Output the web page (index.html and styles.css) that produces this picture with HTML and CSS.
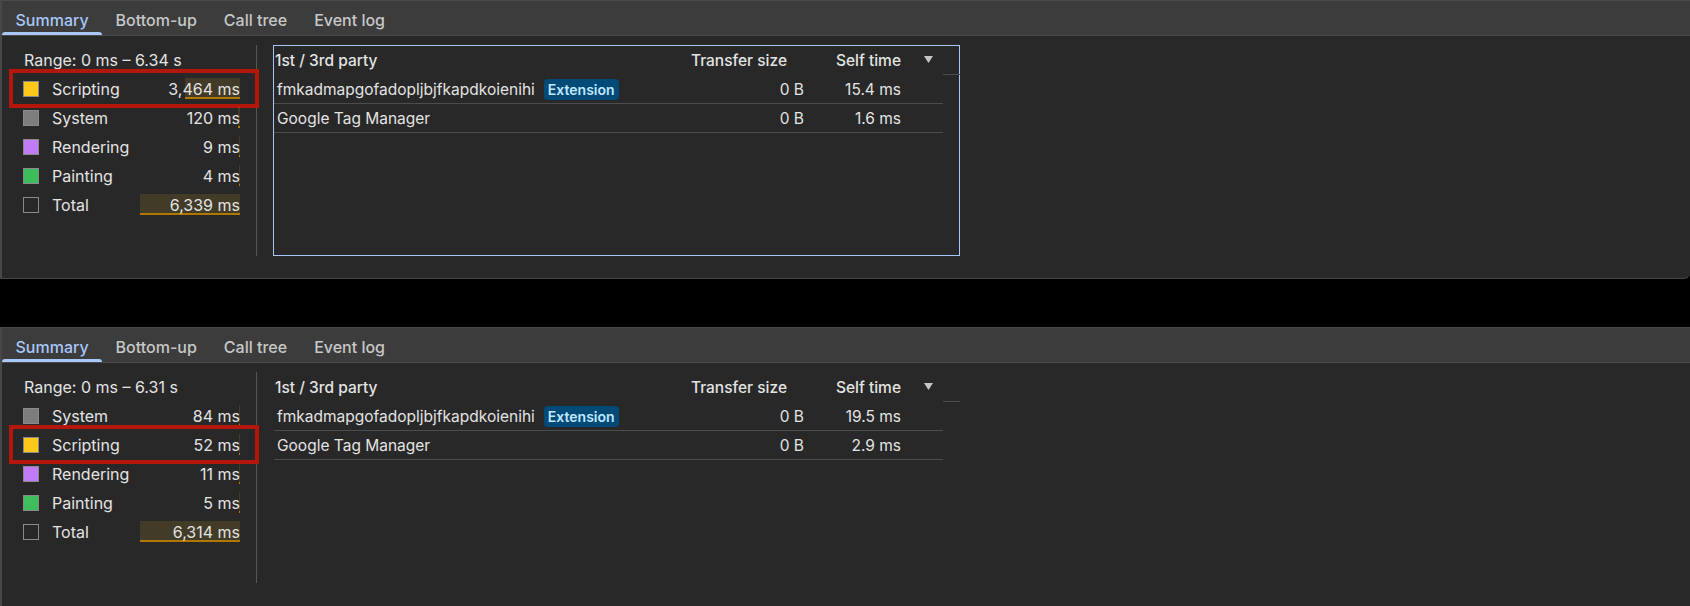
FILE: index.html
```html
<!DOCTYPE html>
<html>
<head>
<meta charset="utf-8">
<link rel="stylesheet" href="styles.css">
</head>
<body>
<div class="panel panel-1">
  <div class="tabbar">
    <div class="tab active">Summary</div>
    <div class="tab">Bottom-up</div>
    <div class="tab">Call tree</div>
    <div class="tab">Event log</div>
  </div>
  <div class="body">
    <div class="summary">
      <div class="range">Range: 0 ms – 6.34 s</div>
      <div class="cat highlight"><span class="swatch sw-script"></span><span class="label">Scripting</span><span class="value"><span class="bar" style="width:54.6px"></span><span class="num">3,464 ms</span></span></div>
      <div class="cat"><span class="swatch sw-system"></span><span class="label">System</span><span class="value"><span class="bar" style="width:1.9px"></span><span class="num">120 ms</span></span></div>
      <div class="cat"><span class="swatch sw-render"></span><span class="label">Rendering</span><span class="value"><span class="bar" style="width:1px"></span><span class="num">9 ms</span></span></div>
      <div class="cat"><span class="swatch sw-paint"></span><span class="label">Painting</span><span class="value"><span class="bar" style="width:1px"></span><span class="num">4 ms</span></span></div>
      <div class="cat"><span class="swatch sw-total"></span><span class="label">Total</span><span class="value"><span class="bar" style="width:100px"></span><span class="num">6,339 ms</span></span></div>
    </div>
    <div class="divider"></div>
    <div class="table focused">
      <div class="thead">
        <div class="th name">1st / 3rd party</div>
        <div class="th size">Transfer size</div>
        <div class="th self">Self time<svg class="sort" width="9" height="7" viewBox="0 0 9 7"><polygon points="0,0 9,0 4.5,7"/></svg></div>
        <div class="gutter"></div>
      </div>
      <div class="tr">
        <div class="td name">fmkadmapgofadopljbjfkapdkoienihi<span class="badge">Extension</span></div>
        <div class="td size">0 B</div>
        <div class="td self">15.4 ms</div>
      </div>
      <div class="tr">
        <div class="td name">Google Tag Manager</div>
        <div class="td size">0 B</div>
        <div class="td self">1.6 ms</div>
      </div>
    </div>
  </div>
</div>

<div class="panel panel-2">
  <div class="tabbar">
    <div class="tab active">Summary</div>
    <div class="tab">Bottom-up</div>
    <div class="tab">Call tree</div>
    <div class="tab">Event log</div>
  </div>
  <div class="body">
    <div class="summary">
      <div class="range">Range: 0 ms – 6.31 s</div>
      <div class="cat"><span class="swatch sw-system"></span><span class="label">System</span><span class="value"><span class="bar" style="width:1.3px"></span><span class="num">84 ms</span></span></div>
      <div class="cat highlight"><span class="swatch sw-script"></span><span class="label">Scripting</span><span class="value"><span class="bar" style="width:1px"></span><span class="num">52 ms</span></span></div>
      <div class="cat"><span class="swatch sw-render"></span><span class="label">Rendering</span><span class="value"><span class="bar" style="width:1px"></span><span class="num">11 ms</span></span></div>
      <div class="cat"><span class="swatch sw-paint"></span><span class="label">Painting</span><span class="value"><span class="bar" style="width:1px"></span><span class="num">5 ms</span></span></div>
      <div class="cat"><span class="swatch sw-total"></span><span class="label">Total</span><span class="value"><span class="bar" style="width:100px"></span><span class="num">6,314 ms</span></span></div>
    </div>
    <div class="divider"></div>
    <div class="table">
      <div class="thead">
        <div class="th name">1st / 3rd party</div>
        <div class="th size">Transfer size</div>
        <div class="th self">Self time<svg class="sort" width="9" height="7" viewBox="0 0 9 7"><polygon points="0,0 9,0 4.5,7"/></svg></div>
        <div class="gutter"></div>
      </div>
      <div class="tr">
        <div class="td name">fmkadmapgofadopljbjfkapdkoienihi<span class="badge">Extension</span></div>
        <div class="td size">0 B</div>
        <div class="td self">19.5 ms</div>
      </div>
      <div class="tr">
        <div class="td name">Google Tag Manager</div>
        <div class="td size">0 B</div>
        <div class="td self">2.9 ms</div>
      </div>
    </div>
  </div>
</div>
</body>
</html>
```

FILE: styles.css
```css
* { box-sizing: border-box; }
html, body { margin: 0; padding: 0; background: #000; }
body {
  width: 1690px;
  height: 606px;
  overflow: hidden;
  font-family: Inter, "Liberation Sans", Arial, sans-serif;
  font-size: 15.5px;
  color: #e3e3e3;
}

.panel {
  background: #282828;
  border-left: 2px solid #474747;
  border-top: 1px solid #4a4a4a;
}
.panel-1 {
  height: 279px;
  border-bottom: 1px solid #464646;
  border-bottom-right-radius: 6px;
  margin-bottom: 48px;
}
.panel-2 { height: 279px; }

.tabbar {
  display: flex;
  height: 35px;
  background: #3c3c3c;
  border-bottom: 1px solid #4a4a4a;
}
.tab {
  position: relative;
  display: flex;
  align-items: center;
  padding: 4px 13.5px 0;
  font-weight: 500;
  font-size: 16px;
  color: #c7c7c7;
}
.tab.active { color: #a8c7fa; }
.tab.active::after {
  content: "";
  position: absolute;
  left: 0;
  right: 0;
  bottom: 0;
  height: 3px;
  background: #a8c7fa;
  border-radius: 3px 3px 0 0;
}

.body { display: flex; height: 242px; }

.summary { width: 254px; padding: 9px 16px 0 21px; flex: none; font-size: 16px; }
.range { height: 29px; display: flex; align-items: center; padding-left: 1px; }
.cat { position: relative; display: flex; align-items: center; height: 29px; }
.swatch { flex: none; width: 16px; height: 16px; border: 1px solid #8a8a8a; margin-right: 13px; }
.sw-script { background: #fdc81a; }
.sw-system { background: #7d7d7d; }
.sw-render { background: #c17bf9; }
.sw-paint { background: #3ebd5c; }
.sw-total { background: transparent; }
.label { flex: 1; }
.value {
  position: relative;
  width: 100px;
  height: 21px;
  display: flex;
  align-items: center;
  justify-content: flex-end;
}
.bar {
  position: absolute;
  right: 0;
  top: 0;
  bottom: 0;
  background: rgba(240, 190, 40, 0.13);
  border-bottom: 2px solid #b07800;
}
.num { position: relative; }

.highlight::before {
  content: "";
  position: absolute;
  left: -14px;
  right: -19px;
  top: -5px;
  bottom: -5px;
  border: 4px solid #b3170c;
}

.divider { flex: none; width: 1px; height: 211px; margin-top: 9px; background: #555; }

.table {
  flex: none;
  margin-left: 16px;
  margin-top: 9px;
  width: 687px;
  height: 211px;
  border: 1px solid transparent;
}
.table.focused { border-color: #a8c7fa; }

.thead {
  display: grid;
  grid-template-columns: 410px 120px 139px 17px;
  height: 29px;
}
.th {
  display: flex;
  align-items: center;
  font-weight: 500;
  color: #e3e3e3;
}
.th.name { padding-left: 1px; }
.th.size { justify-content: flex-end; padding-right: 17px; }
.th.self { justify-content: flex-end; padding-right: 10px; }
.sort { margin-left: 23px; fill: #c4c4c4; margin-top: -2px; }
.gutter { border-bottom: 1px solid #4d4d4d; }

.tr {
  display: grid;
  grid-template-columns: 410px 120px 139px;
  width: 669px;
  height: 29px;
  align-items: center;
  border-bottom: 1px solid #4d4d4d;
}
.td.name { display: flex; align-items: center; padding-left: 3px; white-space: nowrap; }
.td.size { text-align: right; }
.td.self { text-align: right; padding-right: 42px; }

.badge {
  margin-left: 9px;
  height: 21px;
  line-height: 21px;
  padding: 0 4px;
  border-radius: 4px;
  background: #004a77;
  color: #c2e7ff;
  font-weight: 600;
  font-size: 14px;
}
```
